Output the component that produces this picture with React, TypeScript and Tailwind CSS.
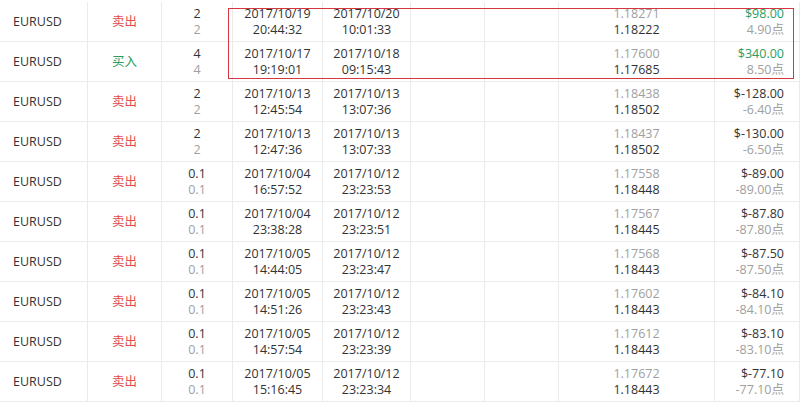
import React from "react";

type Trade = {
  side: "卖出" | "买入";
  lots: string;
  openDate: string;
  openTime: string;
  closeDate: string;
  closeTime: string;
  openPrice: string;
  closePrice: string;
  profit: string;
  points: string;
};

const trades: Trade[] = [
  { side: "卖出", lots: "2", openDate: "2017/10/19", openTime: "20:44:32", closeDate: "2017/10/20", closeTime: "10:01:33", openPrice: "1.18271", closePrice: "1.18222", profit: "$98.00", points: "4.90点" },
  { side: "买入", lots: "4", openDate: "2017/10/17", openTime: "19:19:01", closeDate: "2017/10/18", closeTime: "09:15:43", openPrice: "1.17600", closePrice: "1.17685", profit: "$340.00", points: "8.50点" },
  { side: "卖出", lots: "2", openDate: "2017/10/13", openTime: "12:45:54", closeDate: "2017/10/13", closeTime: "13:07:36", openPrice: "1.18438", closePrice: "1.18502", profit: "$-128.00", points: "-6.40点" },
  { side: "卖出", lots: "2", openDate: "2017/10/13", openTime: "12:47:36", closeDate: "2017/10/13", closeTime: "13:07:33", openPrice: "1.18437", closePrice: "1.18502", profit: "$-130.00", points: "-6.50点" },
  { side: "卖出", lots: "0.1", openDate: "2017/10/04", openTime: "16:57:52", closeDate: "2017/10/12", closeTime: "23:23:53", openPrice: "1.17558", closePrice: "1.18448", profit: "$-89.00", points: "-89.00点" },
  { side: "卖出", lots: "0.1", openDate: "2017/10/04", openTime: "23:38:28", closeDate: "2017/10/12", closeTime: "23:23:51", openPrice: "1.17567", closePrice: "1.18445", profit: "$-87.80", points: "-87.80点" },
  { side: "卖出", lots: "0.1", openDate: "2017/10/05", openTime: "14:44:05", closeDate: "2017/10/12", closeTime: "23:23:47", openPrice: "1.17568", closePrice: "1.18443", profit: "$-87.50", points: "-87.50点" },
  { side: "卖出", lots: "0.1", openDate: "2017/10/05", openTime: "14:51:26", closeDate: "2017/10/12", closeTime: "23:23:43", openPrice: "1.17602", closePrice: "1.18443", profit: "$-84.10", points: "-84.10点" },
  { side: "卖出", lots: "0.1", openDate: "2017/10/05", openTime: "14:57:54", closeDate: "2017/10/12", closeTime: "23:23:39", openPrice: "1.17612", closePrice: "1.18443", profit: "$-83.10", points: "-83.10点" },
  { side: "卖出", lots: "0.1", openDate: "2017/10/05", openTime: "15:16:45", closeDate: "2017/10/12", closeTime: "23:23:34", openPrice: "1.17672", closePrice: "1.18443", profit: "$-77.10", points: "-77.10点" },
];

const cell = "h-full border-r border-[#ebebeb] flex flex-col justify-center leading-[16px]";

export default function App() {
  return (
    <div className="relative w-[800px] h-[403px] overflow-hidden bg-white pt-[2px] text-[12.5px] text-[#333] font-['Open_Sans','Noto_Sans_CJK_SC',sans-serif]">
      {trades.map((t, i) => (
        <div
          key={i}
          className="grid grid-cols-[88px_74px_71px_90px_88px_74px_74px_156px_85px] h-[40px] border-b border-[#ebebeb]"
        >
          <div className={`${cell} pl-[13px]`}>EURUSD</div>
          <div className={`${cell} items-center ${t.side === "买入" ? "text-[#2a9d62]" : "text-[#e14c4c]"}`}>{t.side}</div>
          <div className={`${cell} items-center`}>
            <span>{t.lots}</span>
            <span className="text-[#a0a0a0]">{t.lots}</span>
          </div>
          <div className={`${cell} items-center`}>
            <span>{t.openDate}</span>
            <span>{t.openTime}</span>
          </div>
          <div className={`${cell} items-center`}>
            <span>{t.closeDate}</span>
            <span>{t.closeTime}</span>
          </div>
          <div className={cell} />
          <div className={cell} />
          <div className={`${cell} items-center`}>
            <span className="text-[#a0a0a0]">{t.openPrice}</span>
            <span>{t.closePrice}</span>
          </div>
          <div className={`${cell} items-end pr-[15px]`}>
            <span className={i < 2 ? "text-[#2a9d62]" : ""}>{t.profit}</span>
            <span className="text-[#a0a0a0]">{t.points}</span>
          </div>
        </div>
      ))}
      <div className="absolute left-[228px] top-[8px] w-[566px] h-[71px] border border-[#d4373d]" />
    </div>
  );
}
